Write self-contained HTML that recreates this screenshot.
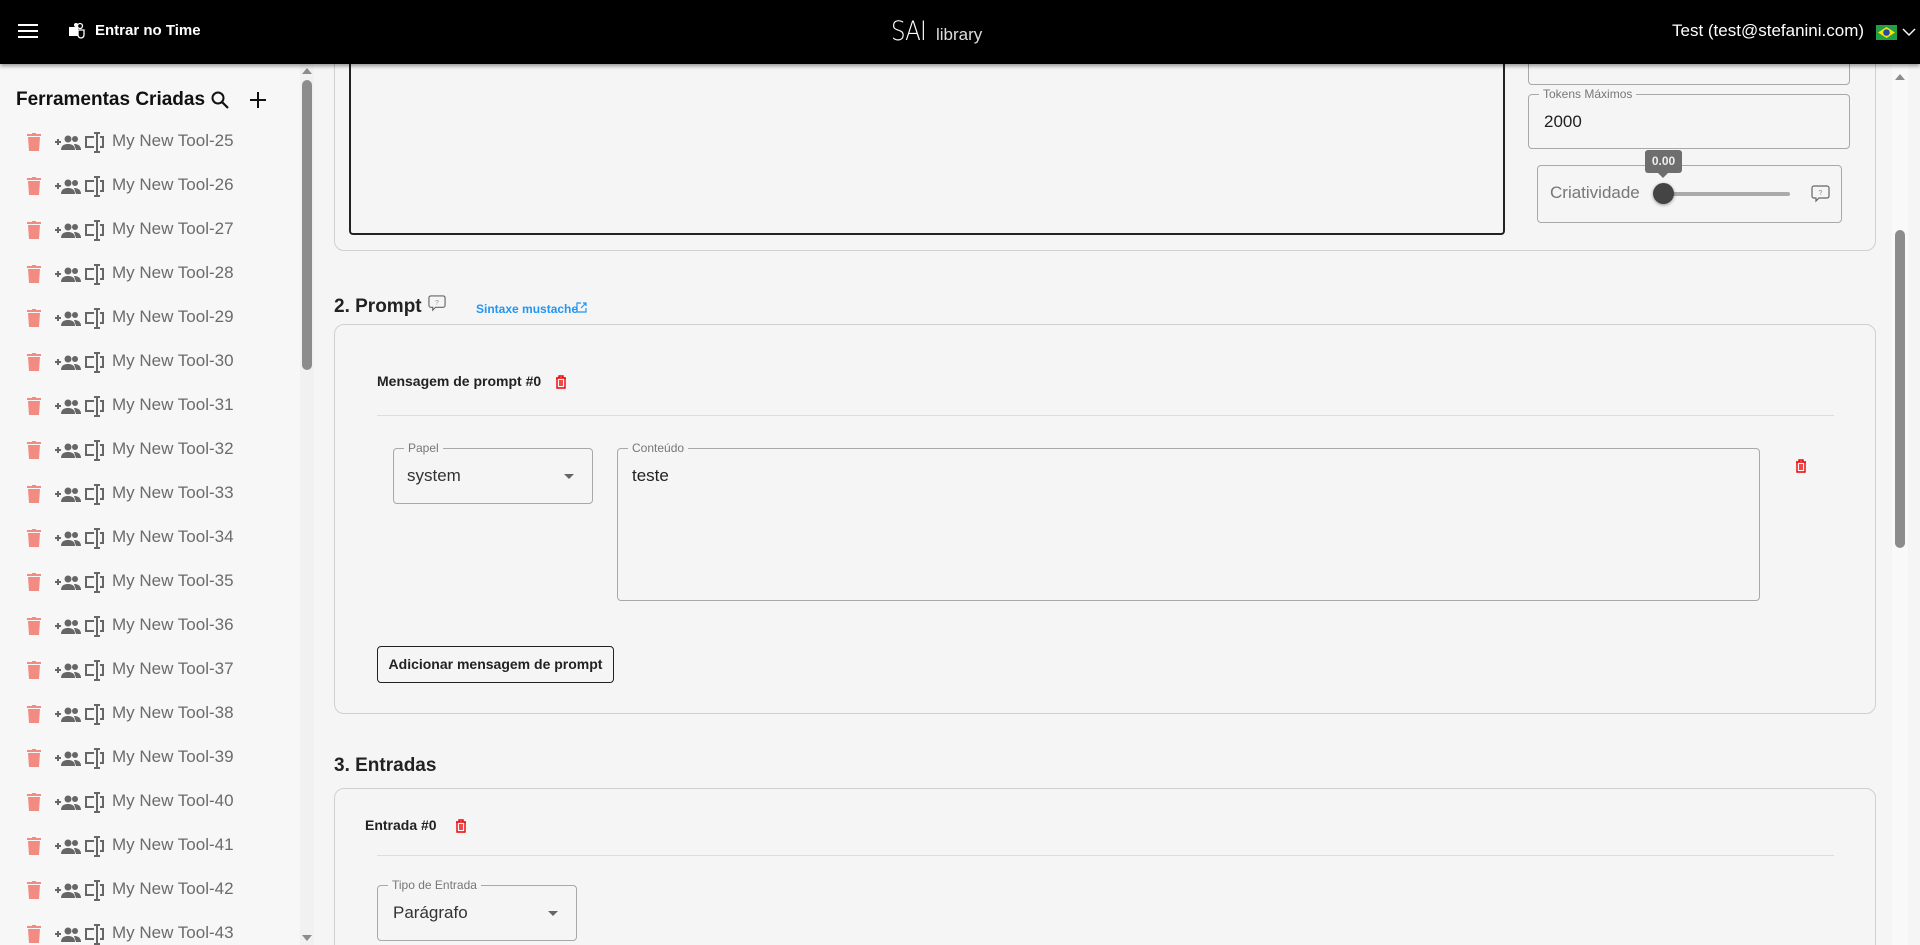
<!DOCTYPE html>
<html><head><meta charset="utf-8"><style>
*{box-sizing:border-box;margin:0;padding:0}
html,body{width:1920px;height:945px;overflow:hidden}
body{background:#f5f5f5;font-family:"Liberation Sans",Arial,sans-serif;color:#222}
#wrap{position:relative;width:1920px;height:945px;overflow:hidden}
.a{position:absolute}
.hdr{left:0;top:0;width:1920px;height:64px;background:#000;box-shadow:0 2px 4px rgba(0,0,0,.4);z-index:5}
.side{left:0;top:64px;width:300px;height:881px;background:#f7f7f7}
.item{left:0;width:300px;height:44px}
.item .t{position:absolute;left:112px;top:10px;font-size:17px;color:#6b6b6b}
.card{border:1px solid #d0d0d0;border-radius:10px;background:#f5f5f5}
.fld{border:1px solid #a8a8a8;border-radius:4px}
.lbl{position:absolute;top:-8px;left:10px;padding:0 4px;background:#f5f5f5;font-size:12px;color:#777}
.val{position:absolute;font-size:17px;color:#222}
.h2{font-size:19px;font-weight:bold;color:#222}
.sub{font-size:14px;font-weight:bold;color:#222}
.arrow{position:absolute;width:0;height:0;border-left:5px solid transparent;border-right:5px solid transparent;border-top:5px solid #666}
</style></head><body><div id="wrap">
<div class="a hdr">
  <div class="a" style="left:18px;top:24px;width:20px;height:2px;background:#fff;box-shadow:0 6px 0 #fff,0 12px 0 #fff"></div>
  <svg class="a" style="left:68px;top:22px" width="18" height="18" viewBox="0 0 18 18"><rect x="1" y="5" width="9" height="9" fill="#fff"/><circle cx="12" cy="4" r="2.5" fill="none" stroke="#fff" stroke-width="1.3"/><path d="M10 8h6v5a3 3 0 0 1-6 0z" fill="none" stroke="#fff" stroke-width="1.3"/><circle cx="8" cy="3" r="2" fill="#fff"/></svg>
  <div class="a" style="left:95px;top:22px;color:#fff;font-weight:bold;font-size:15px">Entrar no Time</div>
  <div class="a" style="left:891px;top:16px;color:#fff;font-size:27px;font-weight:300;letter-spacing:-1px;font-family:'DejaVu Sans','Liberation Sans',sans-serif;transform:scaleX(.85);transform-origin:left">SAI</div>
  <div class="a" style="left:936px;top:25px;color:#ddd;font-size:17px">library</div>
  <div class="a" style="left:1672px;top:21px;color:#fff;font-size:17px">Test (test@stefanini.com)</div>
  <svg class="a" style="left:1876px;top:25px" width="21" height="15" viewBox="0 0 21 15"><rect width="21" height="15" fill="#229e45"/><path d="M10.5 2L19 7.5 10.5 13 2 7.5z" fill="#f8e509"/><circle cx="10.5" cy="7.5" r="3.3" fill="#2b49a3"/></svg>
  <svg class="a" style="left:1902px;top:28px" width="14" height="9" viewBox="0 0 14 9"><path d="M1 1l6 6 6-6" fill="none" stroke="#fff" stroke-width="1.4"/></svg>
</div>

<div class="a side">
  <div class="a" style="left:16px;top:25px;font-size:19px;font-weight:bold;color:#111">Ferramentas Criadas</div>
  <svg class="a" style="left:210px;top:26px" width="20" height="20" viewBox="0 0 20 20"><circle cx="8" cy="8" r="5.5" fill="none" stroke="#111" stroke-width="2"/><path d="M12 12l6 6" stroke="#111" stroke-width="2.2"/></svg>
  <svg class="a" style="left:249px;top:27px" width="18" height="18" viewBox="0 0 18 18"><path d="M9 1v16M1 9h16" stroke="#111" stroke-width="2"/></svg>
</div>
<div id="list"></div>
<div class="a" style="left:300px;top:64px;width:14px;height:881px;background:#f1f1f1"></div>
<div class="a" style="left:302px;top:80px;width:10px;height:290px;background:#8c8c8c;border-radius:5px"></div>
<div class="a" style="left:302px;top:68px;width:0;height:0;border-left:5px solid transparent;border-right:5px solid transparent;border-bottom:6px solid #8c8c8c"></div>
<div class="a" style="left:302px;top:935px;width:0;height:0;border-left:5px solid transparent;border-right:5px solid transparent;border-top:6px solid #8c8c8c"></div>

<div class="a" style="left:1892px;top:64px;width:16px;height:881px;background:#f9f9f9"></div>
<div class="a" style="left:1895px;top:230px;width:10px;height:318px;background:#8c8c8c;border-radius:5px"></div>
<div class="a" style="left:1895px;top:74px;width:0;height:0;border-left:5px solid transparent;border-right:5px solid transparent;border-bottom:6px solid #8c8c8c"></div>

<div class="a card" style="left:334px;top:40px;width:1542px;height:211px"></div>
<div class="a" style="left:349px;top:64px;width:1156px;height:171px;border:2px solid #222;border-top:none;border-radius:0 0 4px 4px"></div>
<div class="a fld" style="left:1528px;top:40px;width:322px;height:45px"></div>
<div class="a fld" style="left:1528px;top:94px;width:322px;height:55px"><span class="lbl">Tokens Máximos</span><span class="val" style="left:15px;top:17px">2000</span></div>
<div class="a fld" style="left:1537px;top:165px;width:305px;height:58px">
  <span class="val" style="left:12px;top:17px;color:#777">Criatividade</span>
  <div class="a" style="left:126px;top:26px;width:126px;height:4px;background:#aaa;border-radius:2px"></div>
  <div class="a" style="left:115px;top:17px;width:21px;height:21px;border-radius:50%;background:#444;box-shadow:0 1px 3px rgba(0,0,0,.4)"></div>
  <svg class="a" style="left:273px;top:18px" width="19" height="19" viewBox="0 0 19 19"><path d="M3 2h13a2 2 0 0 1 2 2v8a2 2 0 0 1-2 2H8l-3 3v-3H3a2 2 0 0 1-2-2V4a2 2 0 0 1 2-2z" fill="none" stroke="#666" stroke-width="1.2"/><text x="9.5" y="11" font-size="7" text-anchor="middle" fill="#888" font-family="Liberation Sans">?</text></svg>
</div>
<div class="a" style="left:1645px;top:150px;width:37px;height:23px;background:#6e6e6e;border-radius:3px;color:#eee;font-size:12px;font-weight:bold;text-align:center;line-height:22px">0.00</div>
<div class="a" style="left:1658px;top:173px;width:0;height:0;border-left:5px solid transparent;border-right:5px solid transparent;border-top:5px solid #6e6e6e"></div>

<div class="a h2" style="left:334px;top:296px">2. Prompt</div>
<svg class="a" style="left:428px;top:294px" width="18" height="18" viewBox="0 0 19 19"><path d="M3 2h13a2 2 0 0 1 2 2v8a2 2 0 0 1-2 2H8l-3 3v-3H3a2 2 0 0 1-2-2V4a2 2 0 0 1 2-2z" fill="none" stroke="#666" stroke-width="1.2"/><text x="9.5" y="11" font-size="7" text-anchor="middle" fill="#888" font-family="Liberation Sans">?</text></svg>
<div class="a" style="left:476px;top:302px;font-size:12px;font-weight:bold;color:#2196f3">Sintaxe mustache</div>
<svg class="a" style="left:576px;top:302px" width="11" height="11" viewBox="0 0 11 11"><path d="M5 1H1v9h9V6M7 1h3v3M10 1L5 6" fill="none" stroke="#2196f3" stroke-width="1.2"/></svg>

<div class="a card" style="left:334px;top:324px;width:1542px;height:390px"></div>
<div class="a sub" style="left:377px;top:373px">Mensagem de prompt #0</div>
<svg class="a" style="left:555px;top:375px" width="12" height="14" viewBox="0 0 12 14"><path d="M1 3h10M4 3V1h4v2M2 3v10h8V3M5 5v6M7 5v6" fill="none" stroke="#e00" stroke-width="1.4"/></svg>
<div class="a" style="left:377px;top:415px;width:1457px;height:1px;background:#ddd"></div>
<div class="a fld" style="left:393px;top:448px;width:200px;height:56px"><span class="lbl">Papel</span><span class="val" style="left:13px;top:17px;color:#333">system</span><span class="arrow" style="left:170px;top:25px"></span></div>
<div class="a fld" style="left:617px;top:448px;width:1143px;height:153px"><span class="lbl">Conteúdo</span><span class="val" style="left:14px;top:17px">teste</span></div>
<svg class="a" style="left:1795px;top:459px" width="12" height="14" viewBox="0 0 12 14"><path d="M1 3h10M4 3V1h4v2M2 3v10h8V3M5 5v6M7 5v6" fill="none" stroke="#e00" stroke-width="1.4"/></svg>
<div class="a" style="left:377px;top:646px;width:237px;height:37px;border:1.5px solid #222;border-radius:4px;font-size:14px;font-weight:bold;text-align:center;line-height:34px">Adicionar mensagem de prompt</div>

<div class="a h2" style="left:334px;top:755px">3. Entradas</div>
<div class="a card" style="left:334px;top:788px;width:1542px;height:200px"></div>
<div class="a sub" style="left:365px;top:817px">Entrada #0</div>
<svg class="a" style="left:455px;top:819px" width="12" height="14" viewBox="0 0 12 14"><path d="M1 3h10M4 3V1h4v2M2 3v10h8V3M5 5v6M7 5v6" fill="none" stroke="#e00" stroke-width="1.4"/></svg>
<div class="a" style="left:377px;top:855px;width:1457px;height:1px;background:#ddd"></div>
<div class="a fld" style="left:377px;top:885px;width:200px;height:56px"><span class="lbl">Tipo de Entrada</span><span class="val" style="left:15px;top:17px;color:#333">Parágrafo</span><span class="arrow" style="left:170px;top:25px"></span></div>
</div>
<script>
var h='';
for(var i=0;i<19;i++){var y=121+44*i;
h+='<div class="a item" style="top:'+y+'px">'+
'<svg class="a" style="left:27px;top:12px" width="14" height="19" viewBox="0 0 14 19"><rect x="0" y="1" width="14" height="2" fill="#f28b82"/><rect x="5" y="0" width="4" height="2" fill="#f28b82"/><path d="M1 4h12l-1 14H2z" fill="#f28b82"/></svg>'+
'<svg class="a" style="left:55px;top:13px" width="26" height="17" viewBox="0 0 26 17"><path d="M0 8h6M3 5v6" stroke="#666" stroke-width="2"/><circle cx="13" cy="5" r="3.5" fill="#666"/><circle cx="20" cy="5" r="3" fill="#666"/><path d="M6 16c0-5 4-6 7-6s7 1 7 6z" fill="#666"/><path d="M19 10c3 0 7 1 7 6h-5z" fill="#666"/></svg>'+
'<svg class="a" style="left:85px;top:11px" width="20" height="21" viewBox="0 0 20 21"><path d="M9 5H1v10h8M15 5h3v10h-3" fill="none" stroke="#666" stroke-width="2"/><path d="M12 1v19M9 1h6M9 20h6" stroke="#666" stroke-width="2"/></svg>'+
'<span class="t">My New Tool-'+(25+i)+'</span></div>';}
document.getElementById('wrap').insertAdjacentHTML('beforeend',h);
</script>
</body></html>
